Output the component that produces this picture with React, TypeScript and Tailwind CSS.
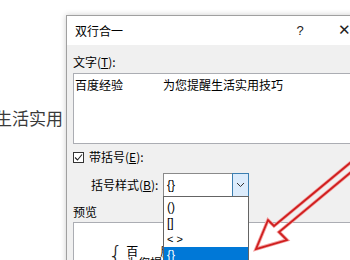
export default function App() {
  return (
    <div className="relative flex h-[260px] w-[350px] overflow-hidden bg-white font-['Noto_Sans_CJK_SC',sans-serif] text-black">
      <div className="w-[66px] shrink-0 overflow-hidden pt-[106px]">
        <div className="ml-[-5px] whitespace-nowrap text-[17px] leading-[24px] text-[#3a3a3a]">生活实用</div>
      </div>

      <div className="relative mt-[15px] w-[301px] shrink-0 self-start border border-[#a0a0a0] shadow-[0_0_6px_rgba(0,0,0,0.2)]">
        {/* title bar */}
        <div className="flex h-[29px] items-center bg-white text-[12px]">
          <span className="pl-[8px]">双行合一</span>
          <span className="flex-1" />
          <span className="w-[44px] text-center font-['Liberation_Sans',sans-serif] text-[13px] text-[#222]">?</span>
          <span className="w-[44px] text-center font-['DejaVu_Sans',sans-serif] text-[15px] font-light text-[#222]">✕</span>
        </div>

        <div className="bg-[#f0f0f0] px-[6px] pb-[60px] text-[12px]">
          <div className="pt-[9px] leading-[16px]">
            文字(<span className="underline">T</span>):
          </div>

          <div className="mt-[3px] h-[71px] border border-[#abadb3] bg-white pl-[1px] pt-[3px] leading-[16px]">
            <span>百度经验</span>
            <span className="ml-[40px]">为您提醒生活实用技巧</span>
          </div>

          <div className="mt-[5px] flex h-[16px] items-center">
            <span className="flex h-[11px] w-[11px] items-center justify-center border border-[#333] bg-white">
              <svg width="9" height="9" viewBox="0 0 9 9">
                <path d="M1 4.5 L3.5 7 L8 1.5" fill="none" stroke="#222" strokeWidth="1.1" />
              </svg>
            </span>
            <span className="ml-[5px] leading-[16px]">
              带括号(<span className="underline">E</span>):
            </span>
          </div>

          <div className="mt-[8px] flex h-[24px] items-center">
            <span className="w-[90px] pl-[18px] leading-[16px]">
              括号样式(<span className="underline">B</span>):
            </span>
            <div className="relative flex h-[24px] w-[86px] items-center border border-[#8a8a8a] bg-white">
              <span className="flex-1 pl-[3px] font-['Liberation_Sans',sans-serif] text-[12px]">{"{}"}</span>
              <span className="mr-[-1px] flex h-[24px] w-[17px] items-center justify-center border border-[#3c7fb1] bg-[#dcecfc]">
                <svg width="9" height="6" viewBox="0 0 9 6">
                  <path d="M1 1 L4.5 4.5 L8 1" fill="none" stroke="#333" strokeWidth="1" />
                </svg>
              </span>

              {/* open list */}
              <div className="absolute left-[-1px] top-full z-10 h-[80px] w-[86px] border border-[#646464] bg-white pt-[2px] font-['Liberation_Sans',sans-serif] text-[12px]">
                <div className="h-[16px] pl-[3px] leading-[16px]">()</div>
                <div className="h-[16px] pl-[3px] leading-[16px]">[]</div>
                <div className="h-[16px] pl-[3px] text-[11px] leading-[16px]">{"< >"}</div>
                <div className="h-[16px] bg-[#0078d7] pl-[3px] leading-[16px] text-white">{"{}"}</div>
              </div>
            </div>
          </div>

          <div className="mt-[7px] leading-[16px]">预览</div>

          <div className="mt-[2px] h-[80px] border border-[#abadb3] bg-white">
            <div className="flex items-start pl-[34px] pt-[21px]">
              <span className="font-['DejaVu_Sans',sans-serif] text-[24px] font-light leading-[24px] text-[#222]">{"{"}</span>
              <div className="ml-[3px] mt-[1px] text-[12px] leading-[12px]">
                <div className="tracking-[22px]">百度经验</div>
                <div>为您提醒生活实用技巧</div>
              </div>
            </div>
          </div>
        </div>
      </div>

      {/* red annotation arrow */}
      <svg className="pointer-events-none absolute inset-0 z-20" width="350" height="260" viewBox="0 0 350 260">
        <polygon
          points="356,158 274,226 268,220 256,249 287,240 279,232 356,168"
          fill="none"
          stroke="#f3a0a0"
          strokeWidth="3.5"
          strokeLinejoin="miter"
        />
        <polygon
          points="356,158 274,226 268,220 256,249 287,240 279,232 356,168"
          fill="none"
          stroke="#cf1f1f"
          strokeWidth="1.8"
          strokeLinejoin="miter"
        />
      </svg>
    </div>
  );
}
